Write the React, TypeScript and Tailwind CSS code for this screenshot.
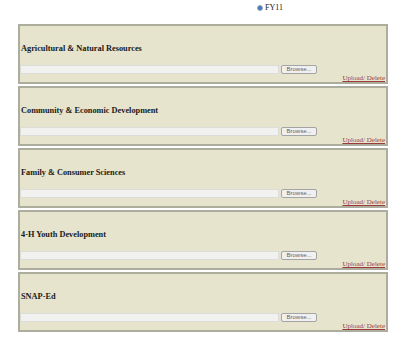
import React from "react";

const sections = [
  "Agricultural & Natural Resources",
  "Community & Economic Development",
  "Family & Consumer Sciences",
  "4-H Youth Development",
  "SNAP-Ed",
];

function Panel({ title }: { title: string }) {
  return (
    <div className="h-[60px] border-2 border-[#adad9e] bg-[#e6e4cd] flex flex-col">
      <div className="pt-[18px] pl-[1px] h-[40px] text-[8.3px] leading-[10px] font-bold text-[#1a1a1a]">
        {title}
      </div>
      <div className="flex items-center h-[9px]">
        <div className="w-[259px] h-[9px] bg-[#f1f1ef] border border-[#dcdcd8]" />
        <div className="ml-[2px] w-[36px] h-[9px] bg-[#f0f0f0] border border-[#a4a4a4] rounded-[2px] text-[6px] leading-[7px] text-[#666] flex items-center justify-center font-['Liberation_Sans',sans-serif]">
          Browse...
        </div>
      </div>
      <div className="flex-1 flex justify-end items-end pr-[1px]">
        <span className="text-[7px] leading-[8px] text-[#9a3a3a] underline">Upload/ Delete</span>
      </div>
    </div>
  );
}

export default function App() {
  return (
    <div className="w-[400px] h-[337px] bg-white font-['Liberation_Serif',serif]">
      <div className="h-[24px] flex items-start pt-[4px] pl-[257px]">
        <div className="flex items-center gap-[2px]">
          <span className="w-[6px] h-[6px] rounded-full bg-[#3d78c4] border border-[#a0a8b0]" />
          <span className="text-[8px] leading-[8px] text-[#222]">FY11</span>
        </div>
      </div>
      <div className="ml-[18px] w-[370px] flex flex-col gap-[2px]">
        {sections.map((s) => (
          <Panel key={s} title={s} />
        ))}
      </div>
    </div>
  );
}
